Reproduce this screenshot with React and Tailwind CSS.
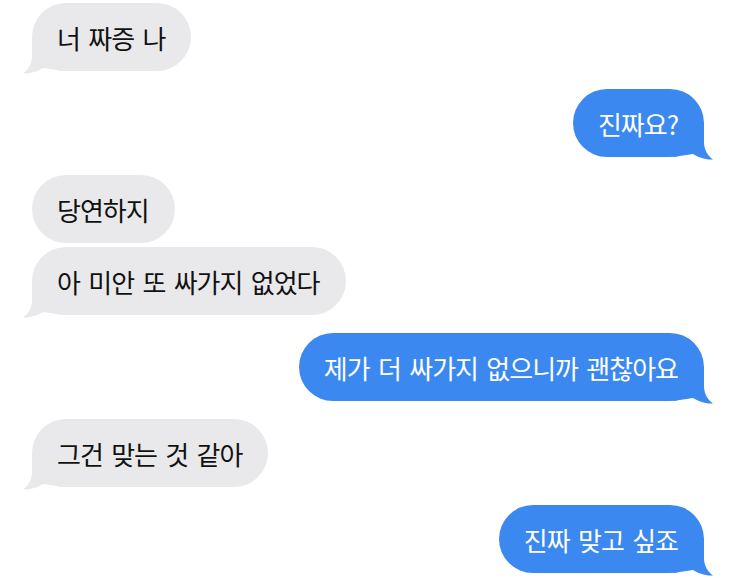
import React from "react";

const messages = [
  { text: "너 짜증 나", me: false, tail: true },
  { text: "진짜요?", me: true, tail: true },
  { text: "당연하지", me: false, tail: false },
  { text: "아 미안 또 싸가지 없었다", me: false, tail: true },
  { text: "제가 더 싸가지 없으니까 괜찮아요", me: true, tail: true },
  { text: "그건 맞는 것 같아", me: false, tail: true },
  { text: "진짜 맞고 싶죠", me: true, tail: true },
];

// little iMessage-style tail, drawn for the left side and mirrored for the right
const Tail = ({ me }) => (
  <svg
    width="40"
    height="40"
    viewBox="0 0 40 40"
    className={
      me
        ? "absolute right-[-9px] bottom-[-3px] -scale-x-100 fill-[#3b88f0]"
        : "absolute left-[-9px] bottom-[-3px] fill-[#e9e9eb]"
    }
  >
    <path d="M9 3 L9 22 C9 30 5 36 0 39.5 C8 40 15 37 20 34 L40 37 L40 3 Z" />
  </svg>
);

const Bubble = ({ text, me, tail }) => (
  <div
    className={`relative flex h-[68px] items-center rounded-[34px] pl-[25px] pr-[26px] text-[26px] tracking-[-1px] [word-spacing:3.5px] ${
      me ? "self-end bg-[#3b88f0] text-white" : "self-start bg-[#e9e9eb] text-[#111]"
    }`}
  >
    {tail && <Tail me={me} />}
    <span className="relative">{text}</span>
  </div>
);

export default function App() {
  return (
    <div
      className="flex h-[578px] w-[735px] flex-col overflow-hidden bg-white pl-[32px] pr-[31px] pt-[3px]"
      style={{ fontFamily: '"Noto Sans CJK KR", "Noto Sans", sans-serif' }}
    >
      {messages.map((m, i) => {
        const prev = messages[i - 1];
        const gap = !prev ? "" : prev.me === m.me ? "mt-[4px]" : "mt-[18px]";
        return (
          <div key={i} className={`flex flex-col ${gap}`}>
            <Bubble {...m} />
          </div>
        );
      })}
    </div>
  );
}
